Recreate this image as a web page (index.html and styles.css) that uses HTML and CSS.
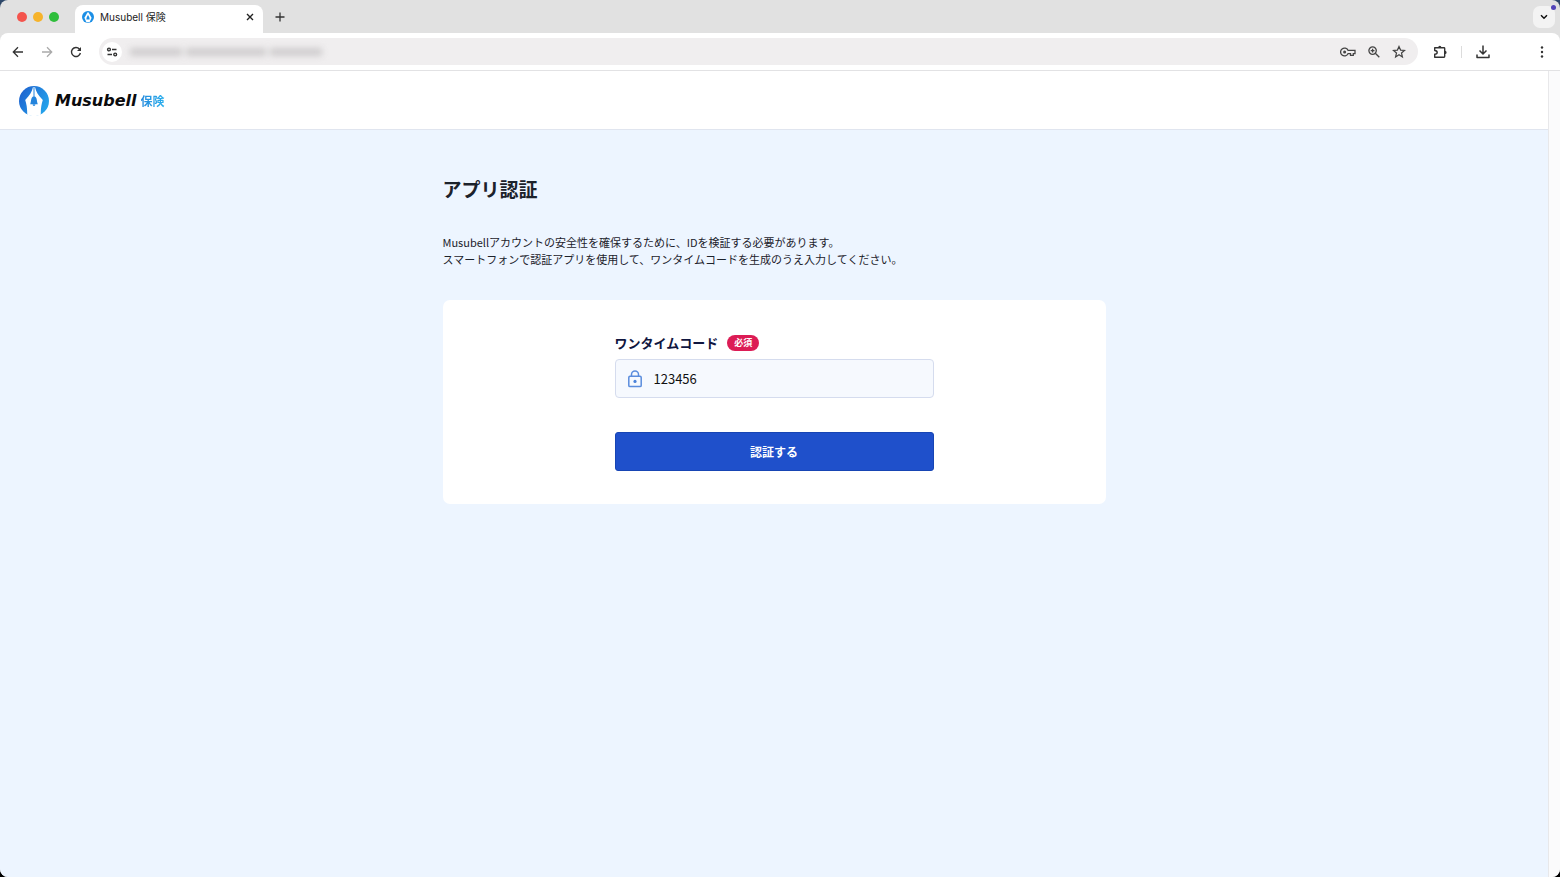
FILE: index.html
```html
<!DOCTYPE html>
<html lang="ja">
<head>
<meta charset="utf-8">
<meta name="viewport" content="width=device-width, initial-scale=1">
<title>Musubell 保険</title>
<link rel="stylesheet" href="styles.css">
</head>
<body>
<div class="window">
  <div class="tabstrip">
    <div class="lights"><span class="light light-close"></span><span class="light light-min"></span><span class="light light-max"></span></div>
    <div class="tab">
      <svg class="favicon" viewBox="0 0 30 30" aria-hidden="true"><circle cx="15" cy="15" r="15" fill="#1b8fe6"/><path d="M14 3 L6 17 L11 28 L19 28 L24 17 L16 3 Z" fill="#fff"/><path d="M15 10 C12 15 11 17 11 21 H19 C19 17 18 15 15 10 Z" fill="#1b8fe6"/></svg>
      <span class="tab-title">Musubell 保険</span>
      <button class="icon-button tab-close" aria-label="タブを閉じる"><svg width="8" height="8" viewBox="0 0 8 8"><path d="M1 1 L7 7 M7 1 L1 7" stroke="#222" stroke-width="1.4"/></svg></button>
    </div>
    <button class="icon-button new-tab" aria-label="新しいタブ"><svg width="10" height="10" viewBox="0 0 10 10"><path d="M5 0.5 V9.5 M0.5 5 H9.5" stroke="#333" stroke-width="1.3"/></svg></button>
    <button class="icon-button tab-search" aria-label="タブを検索"><svg width="8" height="6" viewBox="0 0 8 6"><path d="M1 1.2 L4 4.2 L7 1.2" fill="none" stroke="#111" stroke-width="1.5"/></svg><span class="notice"></span></button>
  </div>

  <div class="toolbar">
    <button class="icon-button" aria-label="戻る"><svg width="12" height="12" viewBox="0 0 12 12"><path d="M11 6 H1.5 M6 1.3 L1.3 6 L6 10.7" fill="none" stroke="#333" stroke-width="1.3"/></svg></button>
    <button class="icon-button" aria-label="進む"><svg width="12" height="12" viewBox="0 0 12 12"><path d="M1 6 H10.5 M6 1.3 L10.7 6 L6 10.7" fill="none" stroke="#aaa" stroke-width="1.3"/></svg></button>
    <button class="icon-button" aria-label="再読み込み"><svg width="12" height="12" viewBox="0 0 12 12"><path d="M10.4 7 A4.5 4.5 0 1 1 9.4 3 L10.5 4.1" fill="none" stroke="#333" stroke-width="1.4"/><path d="M11 1 V5 H7 Z" fill="#333"/></svg></button>
    <div class="address">
      <button class="icon-button site-info" aria-label="サイト情報"><svg width="12" height="10" viewBox="0 0 12 10"><g fill="none" stroke="#333" stroke-width="1.4"><circle cx="3" cy="2.5" r="1.4"/><path d="M6 2.5 H10.5 M1.5 7.5 H6"/><circle cx="9.2" cy="7.5" r="1.4"/></g></svg></button>
      <div class="url"><span class="url-part"></span><span class="url-part url-part-long"></span><span class="url-part"></span></div>
      <button class="icon-button" aria-label="パスワード"><svg width="16" height="12" viewBox="0 0 16 12"><g fill="none" stroke="#444" stroke-width="1.3"><path d="M8 4.3 A3.9 3.9 0 1 0 8 7.7 H10.5 V9.3 H13.3 V7.7 H15 V4.3 Z"/></g><circle cx="4.6" cy="6" r="1.5" fill="#444"/></svg></button>
      <button class="icon-button" aria-label="ズーム"><svg width="12" height="12" viewBox="0 0 12 12"><g fill="none" stroke="#444" stroke-width="1.3"><circle cx="4.6" cy="4.6" r="3.7"/><path d="M7.3 7.3 L11.3 11.3 M2.7 4.6 H6.5 M4.6 2.7 V6.5"/></g></svg></button>
      <button class="icon-button" aria-label="ブックマーク"><svg width="14" height="14" viewBox="0 0 14 14"><path d="M7 1.5 L8.6 5.1 L12.5 5.4 L9.5 8 L10.4 11.9 L7 9.8 L3.6 11.9 L4.5 8 L1.5 5.4 L5.4 5.1 Z" fill="none" stroke="#444" stroke-width="1.2"/></svg></button>
    </div>
    <div class="extras">
      <button class="icon-button" aria-label="拡張機能"><svg width="14" height="14" viewBox="0 0 14 14"><path d="M1.7 2.7 H11 Q11.7 2.7 11.7 3.4 V11.3 Q11.7 12.3 11 12.3 H1.7 V9.3 Q4.2 9 4.2 7.4 Q4.2 5.7 1.7 5.5 Z" fill="none" stroke="#333" stroke-width="1.4" stroke-linejoin="round"/><path d="M5.2 2.4 A1.6 1.6 0 0 1 8.4 2.4 Z M12 5.8 A1.6 1.6 0 0 1 12 9 Z" fill="#333"/></svg></button>
      <span class="divider"></span>
      <button class="icon-button" aria-label="ダウンロード"><svg width="14" height="14" viewBox="0 0 14 14"><path d="M7 0.5 V9 M3.5 5.5 L7 9 L10.5 5.5 M1 9.5 V12.5 H13 V9.5" fill="none" stroke="#333" stroke-width="1.5" stroke-linejoin="round"/></svg></button>
    </div>
    <button class="icon-button" aria-label="メニュー"><svg width="4" height="12" viewBox="0 0 4 12"><g fill="#333"><circle cx="2" cy="1.5" r="1.2"/><circle cx="2" cy="6" r="1.2"/><circle cx="2" cy="10.5" r="1.2"/></g></svg></button>
  </div>

  <div class="viewport">
    <div class="page">
      <header class="site-header">
        <svg class="logo-mark" viewBox="0 0 30 30" aria-hidden="true">
          <defs><linearGradient id="mark" x1="0" y1="0.2" x2="1" y2="0.8"><stop offset="0" stop-color="#1e62cf"/><stop offset="1" stop-color="#25a9ee"/></linearGradient></defs>
          <circle cx="15" cy="15" r="15" fill="url(#mark)"/>
          <path d="M14 1 C13 6 10.5 9.5 6.2 14 C7.5 18.5 8.3 22 8.2 28.4 C12.5 30.4 17.5 30.4 21.8 28.4 C21.7 22 22.5 18.5 23.8 14 C19.5 9.5 17 6 16 1 Z" fill="#fff"/>
          <path d="M14.5 1 H15.5 V10.6 C18.2 11.2 17.6 15 18.8 18.2 H11.2 C12.4 15 11.8 11.2 14.5 10.6 Z M13.6 18.6 H16.4 A1.4 1.4 0 0 1 13.6 18.6 Z" fill="#2484dc"/>
        </svg>
        <span class="brand">Musubell</span>
        <span class="brand-sub">保険</span>
      </header>
      <main class="content">
        <h1 class="title">アプリ認証</h1>
        <p class="lead">Musubellアカウントの安全性を確保するために、IDを検証する必要があります。<br>スマートフォンで認証アプリを使用して、ワンタイムコードを生成のうえ入力してください。</p>
        <section class="card">
          <form class="form">
            <div class="label-row"><label for="code">ワンタイムコード</label><span class="required">必須</span></div>
            <div class="field">
              <svg width="14" height="18" viewBox="0 0 14 18" aria-hidden="true"><g fill="none" stroke="#5b8ddd" stroke-width="1.5"><rect x="0.8" y="6.2" width="12.4" height="10.4" rx="1.2"/><path d="M3.5 6 V4.4 A3.5 3.5 0 0 1 10.5 4.4 V6"/></g><circle cx="7" cy="11.4" r="1.6" fill="#4c83da"/></svg>
              <input class="code" id="code" type="text" inputmode="numeric" value="123456">
            </div>
            <button class="submit" type="button">認証する</button>
          </form>
        </section>
      </main>
    </div>
    <div class="scroll-track"></div>
  </div>
</div>
</body>
</html>
```
FILE: styles.css
```css
* { box-sizing: border-box; }

body {
  margin: 0;
  background: linear-gradient(#2f4a6d, #000 40px);
  color: #1c222b;
  font-family: "Noto Sans CJK JP", sans-serif;
}

.window {
  display: flex;
  flex-direction: column;
  min-height: 100vh;
  overflow: hidden;
  border-radius: 8px;
  background: #e1e1e1;
}

.icon-button {
  display: flex;
  flex: none;
  align-items: center;
  justify-content: center;
  padding: 0;
  border: 0;
  background: none;
}

/* Tab strip */
.tabstrip {
  display: flex;
  align-items: center;
  height: 33px;
  padding: 0 5px 0 17px;
}

.lights { display: flex; gap: 6px; width: 58px; }
.light { width: 10px; height: 10px; border-radius: 50%; }
.light-close { background: #f4544d; }
.light-min { background: #f6b32b; }
.light-max { background: #2fbe3c; }

.tab {
  display: flex;
  align-items: center;
  align-self: flex-end;
  gap: 6px;
  width: 188px;
  height: 28px;
  padding: 0 8px 5px 7px;
  border-radius: 8px 8px 0 0;
  background: #fff;
}

.favicon { width: 12px; height: 12px; }

.tab-title {
  flex: 1;
  color: #222;
  font-family: Inter, "Noto Sans CJK JP", sans-serif;
  font-size: 10px;
  line-height: 16px;
}

.tab-close { width: 10px; height: 10px; }
.new-tab { margin-left: 12px; }

.tab-search {
  position: relative;
  width: 22px;
  height: 22px;
  margin-left: auto;
  border-radius: 7px;
  background: #f3f3f3;
}

.notice {
  position: absolute;
  top: -1px;
  right: -1px;
  width: 5px;
  height: 5px;
  border-radius: 50%;
  background: #5143b8;
}

/* Toolbar */
.toolbar {
  display: flex;
  align-items: center;
  gap: 17px;
  height: 38px;
  padding: 0 16px 0 12px;
  border-bottom: 1px solid #e2e2e4;
  border-radius: 8px 8px 0 0;
  background: #fff;
}

.address {
  display: flex;
  flex: 1;
  align-items: center;
  gap: 12px;
  height: 27px;
  margin-right: -2px;
  padding: 0 12px 0 3px;
  border-radius: 14px;
  background: #f0eeef;
}

.site-info {
  width: 20px;
  height: 20px;
  border-radius: 50%;
  background: #fff;
}

.url { display: flex; flex: 1; gap: 4px; margin-left: -4px; filter: blur(3px); }
.url-part { width: 52px; height: 8px; background: #cfcdce; }
.url-part-long { width: 80px; }

.extras { display: flex; align-items: center; gap: 14px; margin-right: 33px; }
.divider { width: 1px; height: 12px; background: #dcdcdc; }

/* Page */
.viewport { display: flex; flex: 1; }
.page { flex: 1; background: #edf5ff; }
.scroll-track { width: 12px; border-left: 1px solid #e8e8ea; background: #fbfbfc; }

.site-header {
  display: flex;
  align-items: center;
  height: 59px;
  padding: 1px 19px 0;
  border-bottom: 1px solid #e0e5ef;
  background: #fff;
}

.logo-mark { width: 30px; height: 30px; }

.brand {
  margin: 0 4px 0 6px;
  color: #0b0b0d;
  font-family: "DejaVu Sans", sans-serif;
  font-size: 16px;
  font-style: italic;
  font-weight: 700;
  line-height: 24px;
}

.brand-sub {
  background: linear-gradient(90deg, #2389dc, #2bb0ed);
  background-clip: text;
  color: transparent;
  font-size: 12px;
  font-weight: 700;
  line-height: 24px;
}

.content {
  width: 100%;
  max-width: 663px;
  margin: 0 auto;
  padding: 44px 0;
}

.title {
  margin: 0 0 30px;
  font-size: 19px;
  font-weight: 700;
  line-height: 30px;
}

.lead {
  margin: 0 0 32px;
  font-size: 11px;
  line-height: 17px;
}

.card {
  padding: 33px 16px;
  border-radius: 7px;
  background: #fff;
}

.form { max-width: 319px; margin: 0 auto; }

.label-row {
  display: flex;
  align-items: center;
  gap: 9px;
  margin-bottom: 6px;
  color: #10163f;
  font-size: 13px;
  font-weight: 700;
  line-height: 20px;
}

.required {
  padding: 0 7px;
  border-radius: 8px;
  background: #dc1c55;
  color: #fff;
  font-size: 9px;
  line-height: 16px;
}

.field {
  display: flex;
  align-items: center;
  gap: 12px;
  height: 39px;
  margin-bottom: 34px;
  padding: 0 12px;
  border: 1px solid #d5dcee;
  border-radius: 4px;
  background: #f6f9fe;
}

.code {
  flex: 1;
  min-width: 0;
  padding: 0;
  border: 0;
  outline: 0;
  background: none;
  color: #111;
  font-family: inherit;
  font-size: 13px;
  line-height: 20px;
}

.submit {
  display: block;
  width: 100%;
  height: 39px;
  padding: 0;
  border: 1px solid #1745b4;
  border-radius: 3px;
  background: #1f50cb;
  color: #fff;
  font-family: inherit;
  font-size: 12px;
  font-weight: 700;
}
```
